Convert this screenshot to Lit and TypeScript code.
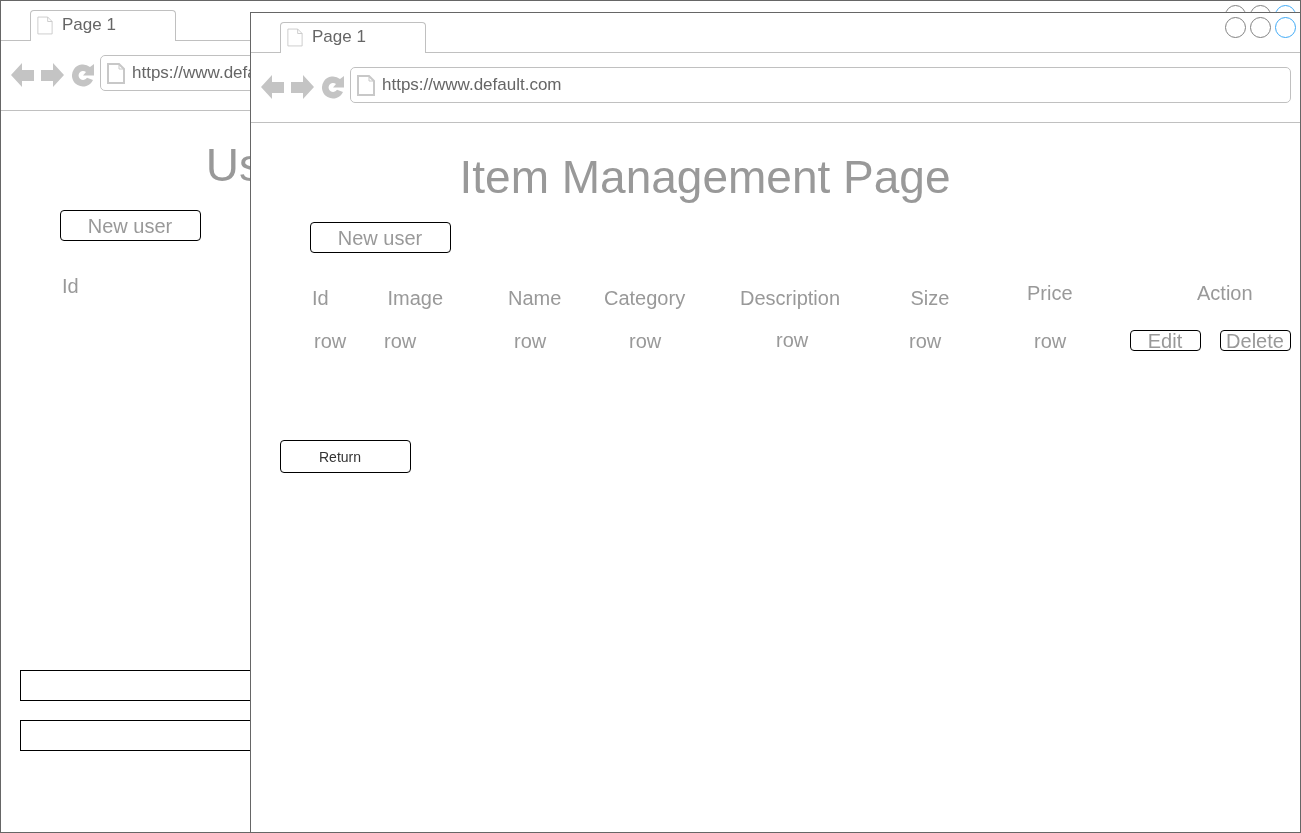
import { LitElement, html, css } from 'lit';
import { customElement } from 'lit/decorators.js';

const pageIcon = (cls: string) => html`
  <svg class=${cls} viewBox="0 0 18 21" fill="none">
    <path d="M1 1H12L17 6V20H1Z" />
    <path class="fold" d="M12 1V6H17" />
  </svg>
`;

@customElement('browser-window')
export class BrowserWindow extends LitElement {
  static styles = css`
    :host {
      display: flex;
      flex-direction: column;
      box-sizing: border-box;
      border: 1px solid #666;
      background: #fff;
      overflow: hidden;
      font-family: "Liberation Sans", Arial, sans-serif;
    }
    .tabbar {
      display: flex;
      flex: none;
      box-sizing: border-box;
      height: 40px;
      padding: 4px 4px 0 29px;
      border-bottom: 1px solid #c0c0c0;
      will-change: transform;
    }
    .tab {
      display: flex;
      align-items: center;
      gap: 9px;
      box-sizing: border-box;
      width: 146px;
      height: 31px;
      margin-top: 5px;
      padding: 0 0 2px 6px;
      background: #fff;
      border: 1px solid #c0c0c0;
      border-bottom: none;
      border-radius: 4px 4px 0 0;
      color: #666;
      font-size: 17px;
    }
    .page-sm {
      width: 16px;
      height: 19px;
      stroke: #c8c8c8;
      stroke-width: 1;
      flex: none;
    }
    .dots {
      display: flex;
      gap: 4px;
      margin-left: auto;
    }
    .dot {
      box-sizing: border-box;
      width: 21px;
      height: 21px;
      border: 1px solid #808080;
      border-radius: 50%;
    }
    .dot.blue {
      border-color: #3fa9f5;
    }
    .toolbar {
      display: flex;
      flex: none;
      box-sizing: border-box;
      height: 70px;
      padding: 14px 9px 0 10px;
      border-bottom: 1px solid #c0c0c0;
      will-change: transform;
    }
    .nav {
      display: flex;
      gap: 7px;
      margin-top: 8px;
      width: 89px;
      flex: none;
    }
    .nav svg {
      width: 23px;
      height: 24px;
      fill: #c4c4c4;
      flex: none;
    }
    .address {
      display: flex;
      align-items: center;
      gap: 7px;
      flex: 1;
      box-sizing: border-box;
      height: 36px;
      padding-left: 6px;
      border: 1px solid #c0c0c0;
      border-radius: 5px;
      color: #666;
      font-size: 17px;
    }
    .page-md {
      width: 18px;
      height: 21px;
      stroke: #c8c8c8;
      stroke-width: 2;
      flex: none;
    }
    .page-md .fold {
      stroke-width: 1;
    }
    .body {
      flex: 1;
      min-height: 0;
      will-change: transform;
    }
  `;

  render() {
    return html`
      <div class="tabbar">
        <div class="tab">${pageIcon('page-sm')}<span>Page 1</span></div>
        <div class="dots">
          <div class="dot"></div>
          <div class="dot"></div>
          <div class="dot blue"></div>
        </div>
      </div>
      <div class="toolbar">
        <div class="nav">
          <svg viewBox="0 0 23 24"><path d="M0 12L11 0V7H23V18H11V24Z" /></svg>
          <svg viewBox="0 0 23 24"><path d="M23 12L12 0V7H0V18H12V24Z" /></svg>
          <svg viewBox="0 0 23 24">
            <path d="M19 4A11 11 0 1 0 22 17L16 14.7A4.5 4.5 0 1 1 15 9L12 12.5H23V1Z" />
          </svg>
        </div>
        <div class="address">${pageIcon('page-md')}<span>https://www.default.com</span></div>
      </div>
      <div class="body"><slot></slot></div>
    `;
  }
}

@customElement('app-root')
export class AppRoot extends LitElement {
  static styles = css`
    :host {
      display: block;
      position: relative;
      width: 1301px;
      height: 833px;
      overflow: hidden;
      background: #fff;
      font-family: "Liberation Sans", Arial, sans-serif;
      color: #999;
      font-size: 20px;
    }
    .win-back {
      position: absolute;
      left: 0;
      top: 0;
      width: 1301px;
      height: 833px;
    }
    .win-front {
      position: absolute;
      left: 250px;
      top: 12px;
      width: 1051px;
      height: 821px;
    }
    h1 {
      width: 908px;
      margin: 26px 0 0;
      font-size: 46px;
      font-weight: 400;
      line-height: 56px;
      text-align: center;
    }
    .btn {
      box-sizing: border-box;
      border: 1px solid #000;
      border-radius: 4px;
      background: transparent;
      color: #999;
      font: inherit;
      padding: 0;
      text-align: center;
    }
    .new {
      display: block;
      width: 141px;
      height: 31px;
      margin: 17px 0 0 59px;
      padding: 1px 1px 0 0;
      line-height: 29px;
    }
    .row {
      display: grid;
      line-height: 24px;
    }
    .head {
      margin-top: 33px;
      padding-left: 61px;
      grid-template-columns: 75.5px 120.5px 96px 136px 170.5px 116.5px 170px auto;
    }
    .cells {
      margin-top: 19px;
      padding-left: 63px;
      grid-template-columns: 70px 130px 115px 147px 133px 125px 96px auto;
    }
    .up5 {
      margin-top: -5px;
    }
    .up1 {
      margin-top: -1px;
    }
    .actions {
      display: flex;
      gap: 19px;
      margin-top: 1px;
    }
    .actions .btn {
      width: 71px;
      height: 21px;
      padding: 1px 1px 0 0;
      line-height: 19px;
    }
    .return {
      display: block;
      width: 131px;
      height: 33px;
      margin: 87px 0 0 29px;
      padding: 1px 11px 0 0;
      color: #333;
      font-size: 14px;
      line-height: 31px;
    }
    .box {
      box-sizing: border-box;
      width: 1200px;
      height: 31px;
      margin-left: 19px;
      border: 1px solid #000;
    }
    .box.first {
      margin-top: 372px;
    }
    .box + .box {
      margin-top: 19px;
    }
  `;

  render() {
    return html`
      <browser-window class="win-back">
        <h1>User Management Page</h1>
        <button class="btn new">New user</button>
        <div class="row head"><span>Id</span></div>
        <div class="box first"></div>
        <div class="box"></div>
      </browser-window>
      <browser-window class="win-front">
        <h1>Item Management Page</h1>
        <button class="btn new">New user</button>
        <div class="row head">
          <span>Id</span>
          <span>Image</span>
          <span>Name</span>
          <span>Category</span>
          <span>Description</span>
          <span>Size</span>
          <span class="up5">Price</span>
          <span class="up5">Action</span>
        </div>
        <div class="row cells">
          <span>row</span>
          <span>row</span>
          <span>row</span>
          <span>row</span>
          <span class="up1">row</span>
          <span>row</span>
          <span>row</span>
          <div class="actions">
            <button class="btn">Edit</button>
            <button class="btn">Delete</button>
          </div>
        </div>
        <button class="btn return">Return</button>
      </browser-window>
    `;
  }
}
